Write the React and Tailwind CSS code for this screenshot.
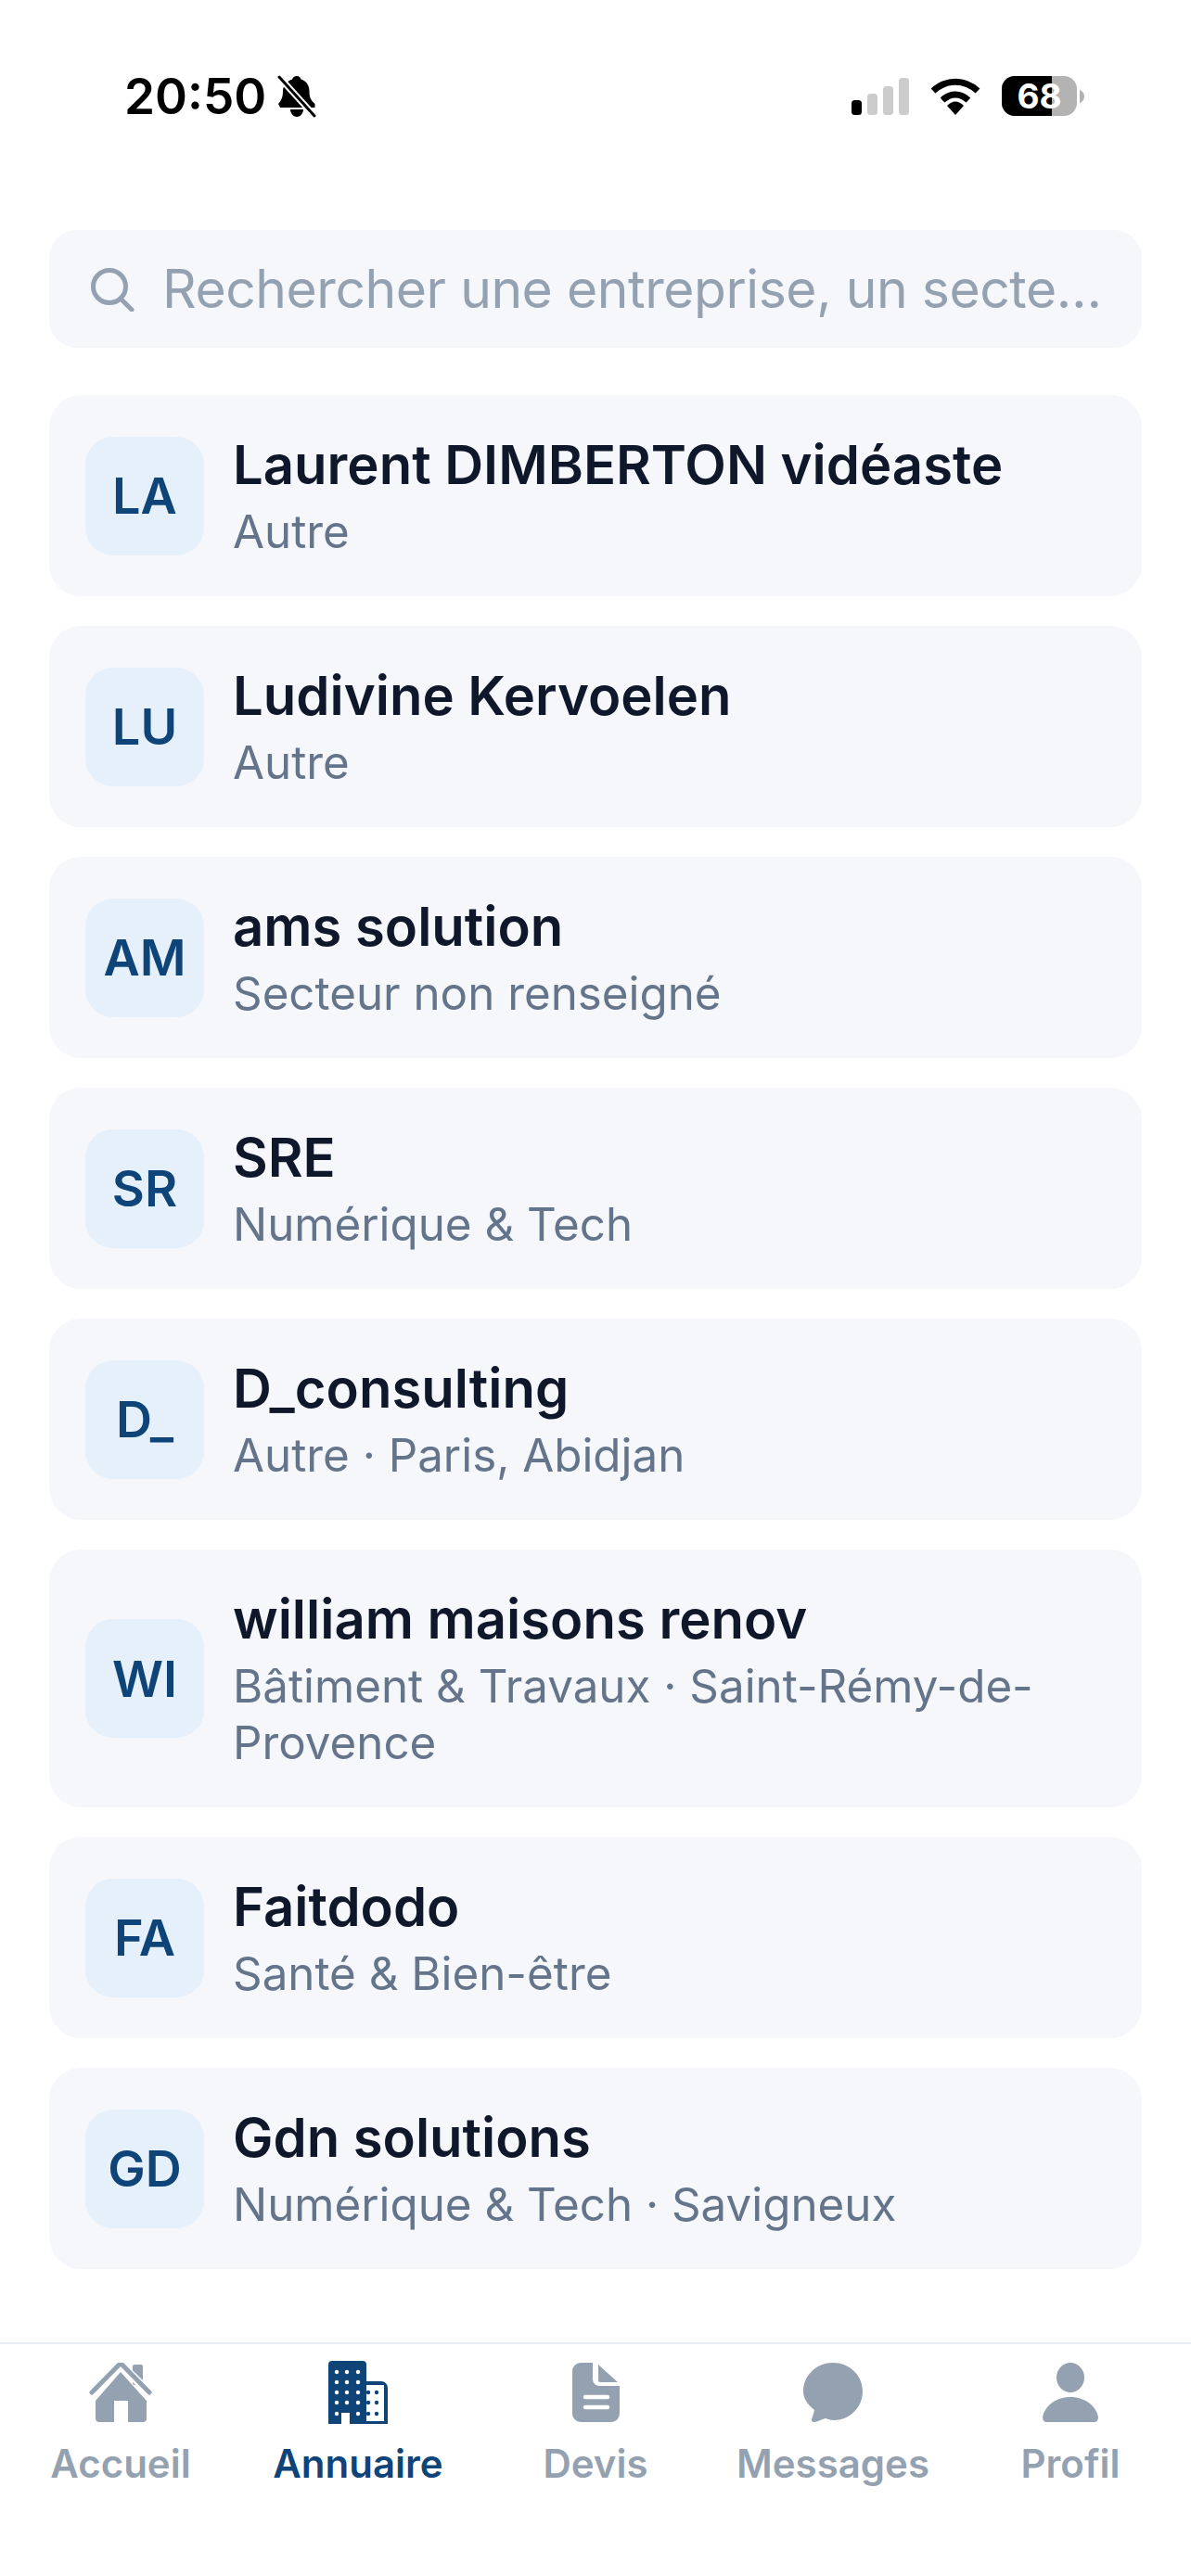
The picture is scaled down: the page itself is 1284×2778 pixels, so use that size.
import React from "react";

const rows = [
  ["LA", "Laurent DIMBERTON vidéaste", "Autre"],
  ["LU", "Ludivine Kervoelen", "Autre"],
  ["AM", "ams solution", "Secteur non renseigné"],
  ["SR", "SRE", "Numérique & Tech"],
  ["D_", "D_consulting", "Autre · Paris, Abidjan"],
  ["WI", "william maisons renov", "Bâtiment & Travaux · Saint-Rémy-de-Provence"],
  ["FA", "Faitdodo", "Santé & Bien-être"],
  ["GD", "Gdn solutions", "Numérique & Tech · Savigneux"],
];

const font = "font-['Inter','Roboto',sans-serif]";

function Row({ initials, name, sub }) {
  return (
    <div className="flex items-center gap-[31px] rounded-[34px] bg-[#f5f7fb] px-[39px] py-[39px]">
      <div className="flex h-[128px] w-[128px] shrink-0 items-center justify-center rounded-[30px] bg-[#e6f0fa] text-[54px] font-semibold text-[#0f4478]">
        {initials}
      </div>
      <div className="min-w-0 flex-1">
        <div className="text-[58px] leading-[72px] font-semibold text-[#0f172a]">{name}</div>
        <div className="mt-[6px] text-[49.300px] leading-[61px] text-[#64748b]">{sub}</div>
      </div>
    </div>
  );
}

function Tab({ label, active, children }) {
  return (
    <div className={`flex w-[256px] flex-col items-center ${active ? "text-[#0f4478]" : "text-[#94a1b1]"}`}>
      <div className="flex h-[72px] items-center justify-center">{children}</div>
      <div className="mt-[15px] text-[42px] leading-[52px] font-semibold">{label}</div>
    </div>
  );
}

export default function App() {
  return (
    <div className={`flex h-[2778px] w-[1284px] flex-col bg-white ${font}`}>
      <div className="flex h-[248px] shrink-0 items-start justify-between">
        <div className="mt-[76px] ml-[134px] flex items-center gap-[12px]">
          <span className="text-[53px] leading-[56px] font-semibold text-black">20:50</span>
          <svg width="42" height="46" viewBox="0 0 42 46">
            <path d="M21 1c3 0 4 2 4.500 3.500 7 2 9 8 9 13 0 7 2 10 6 13.500v4H3l-2-4c3-3 5-7 5-13.500 0-6 4-11 10-13C16.500 3 18 1 21 1z" fill="#000" />
            <path d="M14 37h14c0 4-3 8-7 8s-7-4-7-8z" fill="#000" />
            <path d="M2 2l38 42" stroke="#fff" strokeWidth="7" />
            <path d="M2 2l38 42" stroke="#000" strokeWidth="3" strokeLinecap="round" />
          </svg>
        </div>
        <div className="mt-[82px] mr-[115px] flex items-center gap-[23px]">
          <svg width="62" height="40" viewBox="0 0 62 40">
            <rect x="0" y="24" width="11" height="16" rx="3.500" fill="#000" />
            <rect x="17" y="17" width="11" height="23" rx="3.500" fill="#ccc" />
            <rect x="34" y="9" width="11" height="31" rx="3.500" fill="#ccc" />
            <rect x="51" y="0" width="11" height="40" rx="3.500" fill="#ccc" />
          </svg>
          <svg width="54" height="40" viewBox="0 0 54 40">
            <path d="M3 14C17 1 37 1 51 14" fill="none" stroke="#000" strokeWidth="7" />
            <path d="M13 24c9-8 19-8 28 0" fill="none" stroke="#000" strokeWidth="7" />
            <path d="M18 30c6-6 12-6 18 0L27 40z" fill="#000" />
          </svg>
          <div className="flex items-center">
            <div className="relative flex h-[43px] w-[81px] items-center justify-center overflow-hidden rounded-[14px] bg-[#b3b3b3]">
              <div className="absolute inset-y-0 left-0 w-[54px] bg-black" />
              <span className="relative text-[37px] leading-none font-bold text-white">68</span>
            </div>
            <svg className="ml-[3px]" width="5" height="14" viewBox="0 0 5 14"><path d="M0 0c3 1 5 4 5 7s-2 6-5 7z" fill="#b3b3b3" /></svg>
          </div>
        </div>
      </div>

      <div className="flex-1 px-[53px]">
        <div className="flex h-[127px] items-center gap-[30px] rounded-[30px] bg-[#f5f7fb] pl-[44px] pr-[40px]">
          <svg width="48" height="48" viewBox="0 0 48 48" className="shrink-0" fill="none" stroke="#94a1b1" strokeWidth="5">
            <circle cx="21" cy="21" r="17.500" />
            <path d="M33 34l12 12" strokeLinecap="round" />
          </svg>
          <div className="min-w-0 flex-1 text-[57px] leading-[72px] tracking-[-0.45px] whitespace-nowrap text-[#94a1b1]">
            Rechercher une entreprise, un secte…
          </div>
        </div>
        <div className="mt-[51px] flex flex-col gap-[32px]">
          {rows.map((r) => (
            <Row key={r[0]} initials={r[0]} name={r[1]} sub={r[2]} />
          ))}
        </div>
      </div>

      <div className="flex h-[252px] shrink-0 justify-center border-t-[2px] border-[#e9ecf0] pt-[16px]">
        <Tab label="Accueil">
          <svg width="68" height="64" viewBox="0 0 68 64">
            <rect x="47" y="2" width="11" height="22" rx="2" fill="#94a1b1" />
            <path d="M34 10L62 41v19a4 4 0 0 1-4 4H42V41H27v23H11a4 4 0 0 1-4-4V41z" fill="#94a1b1" />
            <path d="M3 32L34 2l31 30" fill="none" stroke="#fff" strokeWidth="9" strokeLinecap="round" strokeLinejoin="round" />
            <path d="M3 32L31.500 3a3 3 0 0 1 5 0L65 32" fill="none" stroke="#94a1b1" strokeWidth="5" strokeLinecap="round" strokeLinejoin="round" />
          </svg>
        </Tab>
        <Tab label="Annuaire" active>
          <svg width="64" height="68" viewBox="0 0 64 68">
            <path d="M4 0h33a4 4 0 0 1 4 4v64H23V56H14v12H0V4a4 4 0 0 1 4-4z" fill="#0f4478" />
            <path d="M41 22h16a7 7 0 0 1 7 7v39H41z" fill="#0f4478" />
            <rect x="41" y="26" width="19" height="39" fill="#fff" />
            {[12, 23, 34, 45, 57].map((y) =>
              [9, 20, 32].map((x) =>
                y === 57 && x === 20 ? null : <circle key={`${x}-${y}`} cx={x} cy={y} r="2.200" fill="#fff" />
              )
            )}
            {[34, 45, 57].map((y) =>
              [43, 52].map((x) => <circle key={`${x}-${y}`} cx={x} cy={y} r="2.200" fill="#0f4478" />)
            )}
          </svg>
        </Tab>
        <Tab label="Devis">
          <svg width="51" height="64" viewBox="0 0 51 64">
            <path d="M9 0h13v18a7 7 0 0 0 7 7h22v30a9 9 0 0 1-9 9H9a9 9 0 0 1-9-9V9a9 9 0 0 1 9-9z" fill="#94a1b1" />
            <path d="M28 2l21 19H30a2 2 0 0 1-2-2z" fill="#94a1b1" />
            <path d="M14 37h24M14 48h24" stroke="#fff" strokeWidth="4.500" strokeLinecap="round" />
          </svg>
        </Tab>
        <Tab label="Messages">
          <svg width="64" height="64" viewBox="0 0 64 64">
            <path d="M32 0c17 0 32 13 32 31S49 62 33 62c-3 0-6-1-9-2-4 1-10 4-12 4-3 0-3-2-3-3 1-3 2-6 3-10C5 45 0 39 0 31 0 13 15 0 32 0z" fill="#94a1b1" />
          </svg>
        </Tab>
        <Tab label="Profil">
          <svg width="60" height="64" viewBox="0 0 60 64">
            <ellipse cx="30" cy="16" rx="15" ry="16" fill="#94a1b1" />
            <path d="M30 37c16 0 28 10 30 22 0 3-2 5-4 5H4c-2 0-4-2-4-5 2-12 14-22 30-22z" fill="#94a1b1" />
          </svg>
        </Tab>
      </div>
    </div>
  );
}
